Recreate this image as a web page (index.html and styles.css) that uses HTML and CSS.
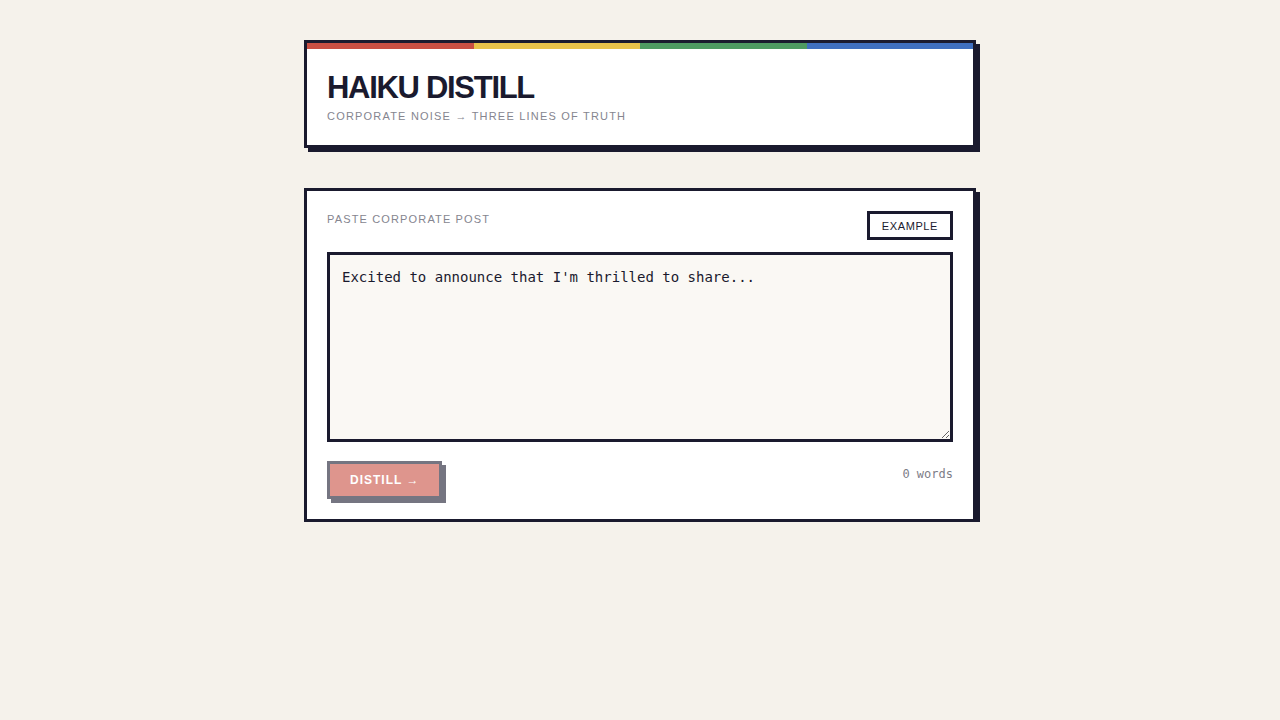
FILE: index.html
```html
<!DOCTYPE html>
<html lang="en">
<head>
<meta charset="utf-8">
<title>Haiku Distill</title>
<link rel="stylesheet" href="styles.css">
</head>
<body>
<main class="wrap">
  <header class="card header">
    <div class="stripes">
      <span class="s red"></span><span class="s yellow"></span><span class="s green"></span><span class="s blue"></span>
    </div>
    <div class="header-body">
      <h1 class="title">HAIKU DISTILL</h1>
      <p class="subtitle">CORPORATE NOISE → THREE LINES OF TRUTH</p>
    </div>
  </header>

  <section class="card panel">
    <div class="row-top">
      <label class="label" for="post">PASTE CORPORATE POST</label>
      <button class="example" type="button">EXAMPLE</button>
    </div>
    <textarea id="post" class="input" placeholder="Excited to announce that I'm thrilled to share..."></textarea>
    <div class="row-bottom">
      <button class="distill" type="button" disabled>DISTILL →</button>
      <span class="count">0 words</span>
    </div>
  </section>
</main>
</body>
</html>
```
FILE: styles.css
```css
* { box-sizing: border-box; }
body {
  margin: 0;
  background: #f5f2eb;
  font-family: "Liberation Sans", Arial, sans-serif;
  color: #1a1a2e;
}
.wrap {
  width: 672px;
  margin: 40px auto 0;
  display: flex;
  flex-direction: column;
  gap: 40px;
}
.card {
  background: #ffffff;
  border: 3px solid #1a1a2e;
  box-shadow: 4px 4px 0 #1a1a2e;
}
.stripes {
  display: flex;
  height: 6px;
}
.s { flex: 1; }
.red { background: #c94f43; }
.yellow { background: #e8c24a; }
.green { background: #4e9a62; }
.blue { background: #3f6fbf; }
.header-body {
  padding: 20px 20px 22px;
}
.title {
  margin: 0;
  font-size: 31px;
  line-height: 38px;
  font-weight: 700;
  letter-spacing: -1.3px;
  color: #1a1a2e;
}
.subtitle {
  margin: 2px 0 0;
  font-size: 11px;
  line-height: 14px;
  letter-spacing: 1.2px;
  color: #85858f;
}
.panel {
  padding: 20px;
}
.row-top {
  display: flex;
  justify-content: space-between;
  align-items: flex-start;
  margin-bottom: 12px;
}
.label {
  font-size: 11px;
  line-height: 14px;
  letter-spacing: 1.15px;
  color: #85858f;
  padding-top: 1px;
}
.example {
  background: #fff;
  border: 3px solid #1a1a2e;
  font-family: "Liberation Sans", Arial, sans-serif;
  font-size: 11px;
  letter-spacing: 0.6px;
  color: #1a1a2e;
  height: 29px;
  padding: 0 12px;
  cursor: pointer;
}
.input {
  display: block;
  width: 100%;
  height: 190px;
  border: 3px solid #1a1a2e;
  background: #faf8f4;
  padding: 12px 12px;
  font-family: "DejaVu Sans Mono", monospace;
  font-size: 14px;
  line-height: 20px;
  color: #1a1a2e;
  outline: none;
  resize: vertical;
}
.input::placeholder {
  color: #1a1a2e;
  opacity: 1;
}
.row-bottom {
  display: flex;
  justify-content: space-between;
  align-items: flex-start;
  margin-top: 19px;
}
.distill {
  background: #c94f43;
  color: #fff;
  border: 3px solid #1a1a2e;
  box-shadow: 4px 4px 0 #1a1a2e;
  height: 38px;
  padding: 0 20px;
  font-family: "Liberation Sans", Arial, sans-serif;
  font-weight: 700;
  font-size: 12px;
  letter-spacing: 1px;
  opacity: 0.6;
}
.count {
  font-family: "DejaVu Sans Mono", monospace;
  font-size: 12px;
  line-height: 14px;
  color: #7d7d87;
  padding-top: 6px;
}
```
